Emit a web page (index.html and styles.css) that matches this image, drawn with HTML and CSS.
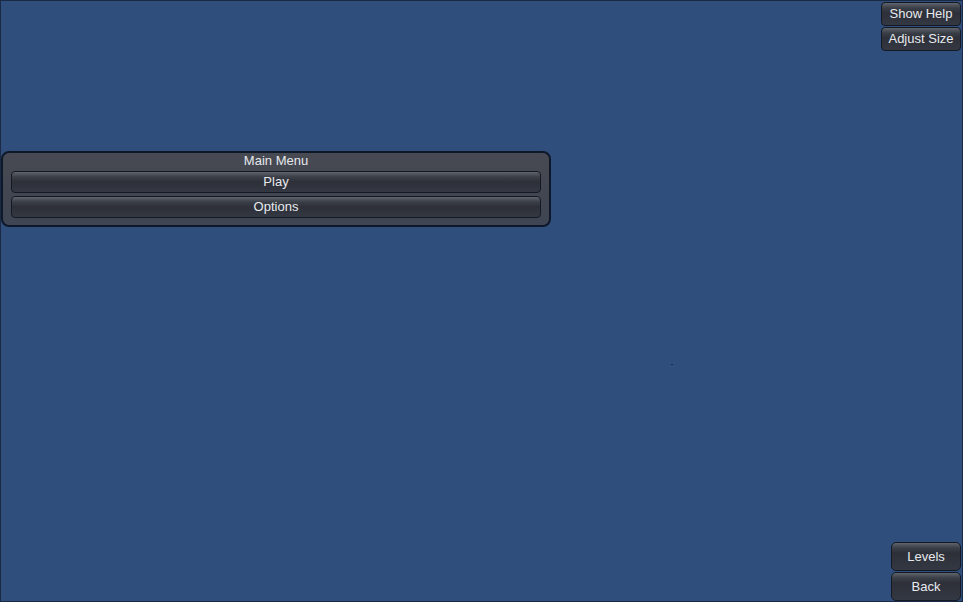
FILE: index.html
```html
<!DOCTYPE html>
<html>
<head>
<meta charset="utf-8">
<link rel="stylesheet" href="styles.css">
</head>
<body>
<div class="screen">
  <div class="top-right">
    <button class="btn small">Show Help</button>
    <button class="btn small">Adjust Size</button>
  </div>
  <div class="panel">
    <div class="panel-title">Main Menu</div>
    <div class="panel-body">
      <button class="btn wide">Play</button>
      <button class="btn wide">Options</button>
    </div>
  </div>
  <div class="bottom-right">
    <button class="btn big">Levels</button>
    <button class="btn big">Back</button>
  </div>
  <div class="speck"></div>
</div>
</body>
</html>
```
FILE: styles.css
```css
html, body {
  margin: 0;
  padding: 0;
  background: #2f4e7b;
}
.screen {
  position: relative;
  width: 963px;
  height: 602px;
  box-sizing: border-box;
  border: 1px solid #1a2a45;
  background: #2f4e7b;
  display: flex;
  flex-direction: column;
  font-family: "Liberation Sans", Arial, sans-serif;
  font-size: 13px;
  color: #e6e8ec;
}
.btn {
  font-family: "Liberation Sans", Arial, sans-serif;
  font-size: 13px;
  color: #e8eaee;
  box-sizing: border-box;
  border: 1px solid #141923;
  border-radius: 4px;
  background: linear-gradient(to bottom, #60656e 0px, #50545d 2px, #3a3e47 5px, #2d3039 10px, #343842 100%);
  padding: 0;
  margin: 0;
  display: flex;
  align-items: center;
  justify-content: center;
  line-height: 1;
}
.top-right {
  align-self: flex-end;
  margin: 1px 1px 0 0;
  display: flex;
  flex-direction: column;
  gap: 1px;
}
.btn.small {
  width: 80px;
  height: 24px;
  padding-bottom: 1px;
}
.panel {
  margin-top: 100px;
  width: 550px;
  height: 76px;
  box-sizing: border-box;
  border: 2px solid #0f1828;
  border-radius: 8px;
  background: linear-gradient(to bottom, #474a52 0%, #424651 60%, #3f4554 100%);
  display: flex;
  flex-direction: column;
}
.panel-title {
  height: 16px;
  box-sizing: border-box;
  text-align: center;
  line-height: 15px;
}
.panel-body {
  display: flex;
  flex-direction: column;
  gap: 3px;
  padding: 2px 0 0 8px;
}
.btn.wide {
  width: 530px;
  height: 22px;
  border-radius: 4px;
  padding-bottom: 1px;
}
.bottom-right {
  margin-top: auto;
  align-self: flex-end;
  margin-right: 1px;
  display: flex;
  flex-direction: column;
  gap: 1px;
}
.btn.big {
  width: 70px;
  height: 29px;
  border-radius: 5px;
}
.speck {
  position: absolute;
  left: 670px;
  top: 363px;
  width: 2px;
  height: 1px;
  background: #1a2a48;
}
```
